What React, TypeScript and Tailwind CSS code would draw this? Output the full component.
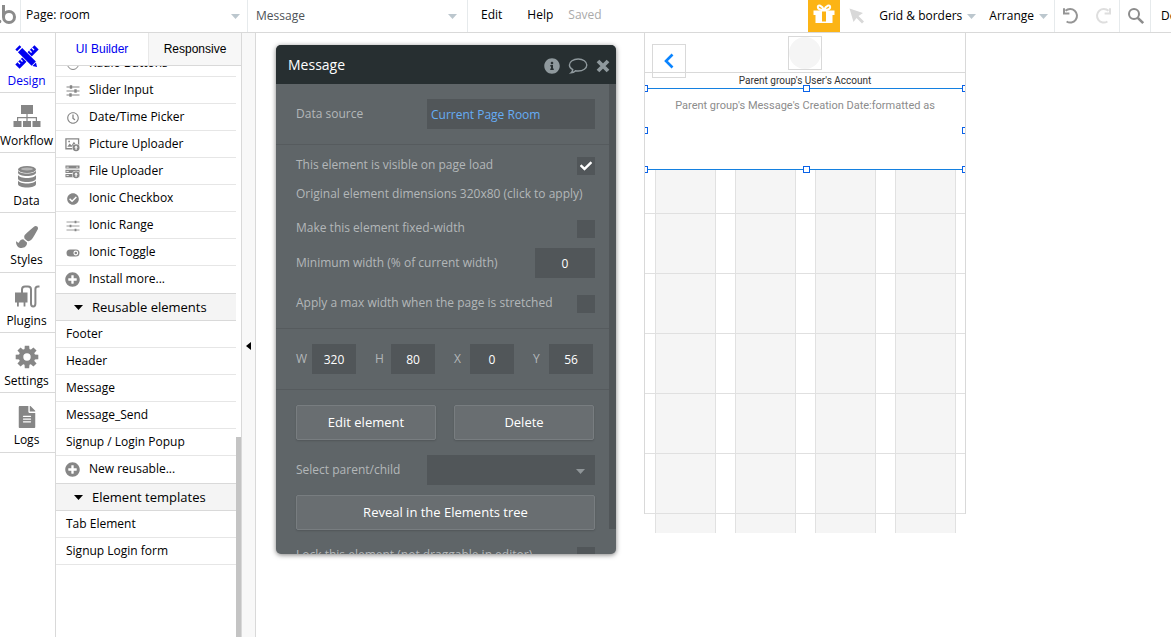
import type { ReactNode } from 'react'
import {
  FaCheck,
  FaCheckCircle,
  FaFileAlt,
  FaInfoCircle,
  FaPaintBrush,
  FaPlusCircle,
  FaRegClock,
} from 'react-icons/fa'

interface CaretProps {
  className?: string
}

function Caret({ className = 'text-[#bcc7ce]' }: CaretProps) {
  return (
    <svg width={9} height={5} viewBox="0 0 9 5" fill="currentColor" className={`shrink-0 ${className}`}>
      <path d="M0 0h9L4.5 5z" />
    </svg>
  )
}

/* ---------- icons ---------- */

function LogoMark() {
  return (
    <svg width={20} height={32} viewBox="0 0 20 32" fill="none" stroke="#8b8b8b" strokeWidth={3}>
      <circle cx={9} cy={17} r={5.5} />
      <path d="M3.500 5v12" />
      <circle cx={-0.5} cy={21.5} r={1.8} fill="#8b8b8b" stroke="none" />
    </svg>
  )
}

function DesignIcon() {
  return (
    <svg width={24} height={24} viewBox="0 0 24 24" fill="currentColor">
      <g transform="rotate(-45 12 12)">
        <path d="M-1.5 9h27v6h-27z" />
        <path d="M1.5 9h1.3v3H1.5zM5 9h1.3v3H5zM17.8 9h1.3v3h-1.3zM21.3 9h1.3v3h-1.3z" fill="#fff" />
      </g>
      <g transform="rotate(45 12 12)">
        <path d="M-2 8.2h29v7.6H-2z" fill="#fff" />
        <path d="M-1.5 9H1v6h-2.500zM2.200 9H21.500v6H2.200zM22.200 9.500l4 2.500-4 2.500z" />
      </g>
    </svg>
  )
}

function WorkflowIcon() {
  return (
    <svg width={28} height={24} viewBox="0 0 28 24" fill="currentColor">
      <path d="M8 0h12v9H8zM13.400 9h1.200v7h-1.200zM4 12h20v1.200H4zM4 12h1.200v4H4zM22.800 12H24v4h-1.200z" />
      <path d="M0.500 16h8v6h-8zM10 16h8v6h-8zM19.500 16h8v6h-8z" />
    </svg>
  )
}

function DataIcon() {
  return (
    <svg width={20} height={24} viewBox="0 0 20 24" fill="currentColor">
      <ellipse cx={10} cy={4.500} rx={9} ry={3.500} />
      <ellipse cx={10} cy={4} rx={6} ry={1.500} fill="#b5b5b5" />
      <path d="M1 5v2.500c0 2 4 3.500 9 3.500s9-1.500 9-3.500V5c0 2-4 3.500-9 3.500S1 7 1 5z" />
      <path d="M1 10v3.500C1 15.500 5 17 10 17s9-1.500 9-3.500V10c-1 2-4.500 3-9 3s-8-1-9-3z" />
      <path d="M1 15.500V19c0 2 4 3.500 9 3.500s9-1.500 9-3.500v-3.500c-1 2-4.500 3-9 3s-8-1-9-3z" />
    </svg>
  )
}

function PluginsIcon() {
  return (
    <svg width={26} height={24} viewBox="0 0 26 24" fill="none" stroke="currentColor" strokeWidth={2}>
      <path d="M8 8V4.500q0-3 3-3h3q3 0 3 3v14q0 3 2.200 3t2.200-3V4q0-2.500 2.600-2.500h1.500" />
      <path d="M1 7.500h12.500v10H1zM3 17.500h1.800v4H3zM9.600 17.500h1.800v4H9.600z" fill="currentColor" stroke="none" />
    </svg>
  )
}

const TEETH = [0, 45, 90, 135, 180, 225, 270, 315]

function GearIcon() {
  return (
    <svg width={24} height={24} viewBox="0 0 24 24" fill="currentColor">
      {TEETH.map(deg => (
        <path key={deg} d="M9.500 5l.3-4.300h4.400l.3 4.300z" transform={`rotate(${deg} 12 12)`} />
      ))}
      <circle cx={12} cy={12} r={6} fill="none" stroke="currentColor" strokeWidth={4.600} />
    </svg>
  )
}

function SliderIcon({ thin = false }: { thin?: boolean }) {
  return (
    <svg width={14} height={14} viewBox="0 0 14 14" stroke="currentColor" strokeWidth={thin ? 0.8 : 1.2}>
      <path d="M0.500 3h13M0.500 7h13M0.500 11h13" />
      {thin ? (
        <path d="M9.500 1.800v2.400M4.500 5.800v2.400M9.500 9.800v2.400" strokeWidth={1.800} />
      ) : (
        <path d="M5 1.200v3.600M9.500 5.200v3.600M4.500 9.200v3.600" strokeWidth={2.400} />
      )}
    </svg>
  )
}

function UploadBadge() {
  return (
    <>
      <circle cx={11.800} cy={11} r={4.200} fill="#fff" />
      <circle cx={11.800} cy={11} r={3.700} />
      <path d="M11.800 8.600l2 2.200h-1.300v2.400h-1.400v-2.400H9.800z" fill="#fff" />
    </>
  )
}

function PictureIcon() {
  return (
    <svg width={16} height={15} viewBox="0 0 16 15" fill="currentColor">
      <path d="M1 1.500h13.500v10.500H1z" fill="none" stroke="currentColor" strokeWidth={1.400} />
      <path d="M2.500 10L5 6.500l2 2L9.500 4.500l2 3V10zM3.500 3.500h1.800V5H3.500z" />
      <UploadBadge />
    </svg>
  )
}

function FileUploadIcon() {
  return (
    <svg width={16} height={15} viewBox="0 0 16 15" fill="currentColor">
      <path d="M0.500 1h15v3.400h-15zM0.500 5.600h15V9h-15zM0.500 10.200h15v3.400h-15z" />
      <path d="M1.500 2.300H4v.8H1.500zM1.500 6.900H4v.8H1.500zM1.500 11.500H4v.8H1.500zM12 2.300h2v.8h-2z" fill="#fff" />
      <UploadBadge />
    </svg>
  )
}

function ToggleIcon() {
  return (
    <svg width={14} height={8} viewBox="0 0 14 8" fill="currentColor">
      <rect x={0.500} y={0.500} width={13} height={7} rx={3.500} />
      <circle cx={9.800} cy={4} r={2.400} fill="#fff" />
      <circle cx={9.800} cy={4} r={1.300} />
    </svg>
  )
}

function GiftIcon() {
  return (
    <svg width={22} height={20} viewBox="0 0 22 20" fill="#fff">
      <path d="M0.500 6.500h21V11h-21zM2.500 10.500h17V19h-17z" />
      <path
        d="M11 6C9 1.500 5 .2 4.800 3 4.600 5.600 8 6 11 6zM11 6c2-4.500 6-5.800 6.200-3C17.400 5.600 14 6 11 6z"
        fill="none"
        stroke="#fff"
        strokeWidth={2}
      />
      <path d="M9 7.500h4V17.500H9z" fill="#fcb415" />
    </svg>
  )
}

function CursorIcon() {
  return (
    <svg width={16} height={16} viewBox="0 0 16 16" fill="#d8d8d8">
      <path d="M0.500 0.500l13.500 4.500-4.500 3 5.500 5.500-2 2-5.500-5.500L4.500 14z" />
    </svg>
  )
}

function UndoIcon() {
  return (
    <svg width={18} height={18} viewBox="0 0 18 18" fill="none" stroke="currentColor" strokeWidth={2}>
      <path d="M3.500 3.800A6.800 6.800 0 1 1 4.600 14.500" />
      <path d="M2 1.200v5.300h5.400" />
    </svg>
  )
}

function SearchIcon() {
  return (
    <svg width={18} height={18} viewBox="0 0 18 18" fill="none" stroke="#8c8c8c" strokeWidth={2}>
      <circle cx={7} cy={7} r={5} />
      <path d="M10.800 10.800l5.400 5.400" strokeWidth={2.600} />
    </svg>
  )
}

function CommentIcon() {
  return (
    <svg width={20} height={16} viewBox="0 0 20 16" fill="none" stroke="currentColor" strokeWidth={1.400}>
      <path d="M10.200 1C5.300 1 1.400 3.600 1.400 7c0 2 1.400 3.700 3.400 4.700-.2 1.400-.9 2.300-1.900 3.200 1.900-.2 3.400-.9 4.700-2.200.8.200 1.700.3 2.600.3 4.900 0 8.600-2.600 8.600-6S15.100 1 10.200 1z" />
    </svg>
  )
}

function CloseIcon() {
  return (
    <svg width={14} height={14} viewBox="0 0 14 14" stroke="currentColor" strokeWidth={3.800}>
      <path d="M2 2l10 10M12 2L2 12" />
    </svg>
  )
}

/* ---------- top bar ---------- */

function TopBar() {
  return (
    <header className="flex h-[33px] shrink-0 overflow-hidden border-b border-[#d9d9d9] bg-white">
      <a href="#home" aria-label="Home" className="w-[21px] shrink-0 border-r border-[#e6eaec]">
        <LogoMark />
      </a>
      <div className="relative w-[227px] shrink-0 border-r border-[#e6eaec]">
        <select aria-label="Page" className="h-[30px] w-full appearance-none bg-transparent pl-[5px] outline-none">
          <option>Page: room</option>
        </select>
        <Caret className="pointer-events-none absolute top-[14px] right-[7px] text-[#bcc7ce]" />
      </div>
      <div className="relative w-[220px] shrink-0 border-r border-[#e6eaec]">
        <select aria-label="Element" className="h-8 w-full appearance-none bg-transparent pl-2 text-[#4d5358] outline-none">
          <option>Message</option>
        </select>
        <Caret className="pointer-events-none absolute top-[14px] right-[10px] text-[#bcc7ce]" />
      </div>
      <div className="flex h-[30px] items-center pl-[13px]">
        <button>Edit</button>
        <button className="ml-[25px]">Help</button>
        <span className="ml-[15px] text-[#aaa]">Saved</span>
      </div>

      <div className="ml-auto flex h-8 shrink-0 items-center">
        <button aria-label="Gift" className="flex h-8 w-8 items-center justify-center bg-[#fcb415] pb-1">
          <GiftIcon />
        </button>
        <button aria-label="Pointer" className="ml-[9px]">
          <CursorIcon />
        </button>
        <button className="ml-[14px] flex items-center gap-[5px]">
          Grid &amp; borders
          <Caret />
        </button>
        <button className="ml-[13px] flex items-center gap-[5px]">
          Arrange
          <Caret />
        </button>
        <div className="ml-[6px] flex h-full items-center gap-[14px] border-x border-[#e6eaec] px-[7px] text-[#959595]">
          <button aria-label="Undo">
            <UndoIcon />
          </button>
          <button aria-label="Redo" className="-scale-x-100 text-[#dedede]">
            <UndoIcon />
          </button>
        </div>
        <button
          aria-label="Search"
          className="flex h-full w-[31px] items-center justify-center border-r border-[#e6eaec] pl-px"
        >
          <SearchIcon />
        </button>
        <button className="h-[30px] w-5 overflow-hidden pl-[10px] text-left">Development</button>
      </div>
    </header>
  )
}

/* ---------- left navigation ---------- */

const NAV: { label: string; icon: ReactNode }[] = [
  { label: 'Design',   icon: <DesignIcon /> },
  { label: 'Workflow', icon: <WorkflowIcon /> },
  { label: 'Data',     icon: <DataIcon /> },
  { label: 'Styles',   icon: <FaPaintBrush size={22} /> },
  { label: 'Plugins',  icon: <PluginsIcon /> },
  { label: 'Settings', icon: <GearIcon /> },
  { label: 'Logs',     icon: <FaFileAlt size={22} /> },
]

function SideNav() {
  return (
    <nav className="w-14 shrink-0 overflow-hidden border-r border-[#d9d9d9] bg-white">
      {NAV.map(item => (
        <a
          key={item.label}
          href={`#${item.label.toLowerCase()}`}
          className={`flex h-[60px] flex-col items-center border-b border-[#d9d9d9] pt-3 pr-[2px] ${
            item.label === 'Design' ? 'text-[#0000f0]' : 'text-[#868686]'
          }`}
        >
          <span className="flex h-6 items-center">{item.icon}</span>
          <span className={`leading-6 ${item.label === 'Design' ? 'text-[#0000f0]' : 'text-black'}`}>
            {item.label}
          </span>
        </a>
      ))}
    </nav>
  )
}

/* ---------- element palette ---------- */

interface Entry {
  label: string
  icon?: ReactNode
}

const INPUTS: Entry[] = [
  { label: 'Radio Buttons',    icon: <span className="h-3 w-3 rounded-full border border-[#868686]" /> },
  { label: 'Slider Input',     icon: <SliderIcon /> },
  { label: 'Date/Time Picker', icon: <FaRegClock size={12} /> },
  { label: 'Picture Uploader', icon: <PictureIcon /> },
  { label: 'File Uploader',    icon: <FileUploadIcon /> },
  { label: 'Ionic Checkbox',   icon: <FaCheckCircle size={12} /> },
  { label: 'Ionic Range',      icon: <SliderIcon thin /> },
  { label: 'Ionic Toggle',     icon: <ToggleIcon /> },
  { label: 'Install more...',  icon: <FaPlusCircle size={15} /> },
]

const REUSABLE: Entry[] = [
  { label: 'Footer' },
  { label: 'Header' },
  { label: 'Message' },
  { label: 'Message_Send' },
  { label: 'Signup / Login Popup' },
  { label: 'New reusable...', icon: <FaPlusCircle size={15} /> },
]

const TEMPLATES: Entry[] = [{ label: 'Tab Element' }, { label: 'Signup Login form' }]

function EntryList({ entries, last = false }: { entries: Entry[]; last?: boolean }) {
  return (
    <ul>
      {entries.map((entry, i) => (
        <li
          key={entry.label}
          className={`flex h-[27px] items-center gap-2 border-b ${entry.icon ? 'pl-[9px]' : 'pl-[10px]'} ${
            i < entries.length - 1 || last ? 'border-[#e6e6e6]' : 'border-transparent'
          }`}
        >
          {entry.icon && (
            <span className="flex w-4 shrink-0 justify-center pt-px pr-px text-[#868686]">{entry.icon}</span>
          )}
          <span>{entry.label}</span>
        </li>
      ))}
    </ul>
  )
}

function SectionHeader({ title }: { title: string }) {
  return (
    <button className="flex h-7 w-full items-center gap-[9px] border-y border-[#d9d9d9] bg-[#f4f4f4] pt-px pl-[18px] text-[13px]">
      <Caret className="text-black" />
      {title}
    </button>
  )
}

function Palette() {
  return (
    <aside className="flex w-[186px] shrink-0 flex-col border-r border-[#d9d9d9] bg-white">
      <div role="tablist" className="flex h-[33px] shrink-0 border-b border-[#d9d9d9] font-['Liberation_Sans']">
        <button role="tab" aria-selected className="w-[92px] text-[#0000f0]">
          UI Builder
        </button>
        <button role="tab" aria-selected={false} className="flex-1 border-l border-[#e8e8e8] bg-[#f7f7f7]">
          Responsive
        </button>
      </div>
      <div className="flex min-h-0 flex-1 overflow-hidden">
        <div className="-mt-4 w-[180px]">
          <EntryList entries={INPUTS} />
          <SectionHeader title="Reusable elements" />
          <EntryList entries={REUSABLE} />
          <SectionHeader title="Element templates" />
          <EntryList entries={TEMPLATES} last />
        </div>
        <div className="mt-[371px] w-[5px] bg-[#c4c4c4]" />
      </div>
    </aside>
  )
}

/* ---------- property editor ---------- */

function CheckRow({ id, label, checked = false }: { id: string; label: string; checked?: boolean }) {
  return (
    <div className="flex items-start justify-between">
      <label htmlFor={id}>{label}</label>
      <span className="relative flex h-[18px] w-[18px]">
        <input
          id={id}
          type="checkbox"
          defaultChecked={checked}
          className="peer h-[18px] w-[18px] appearance-none bg-[#515659]"
        />
        <FaCheck
          size={12}
          className="pointer-events-none absolute top-[3px] left-[3px] hidden text-white peer-checked:block"
        />
      </span>
    </div>
  )
}

const GEOMETRY = [
  { label: 'W', value: '320' },
  { label: 'H', value: '80' },
  { label: 'X', value: '0' },
  { label: 'Y', value: '56' },
]

const BUTTON =
  'h-[35px] rounded-[2px] border border-[#787d80] bg-[#696e71] text-[13px] font-medium text-white shadow-[0_1px_2px_rgba(0,0,0,0.15)]'

function PropertyEditor() {
  return (
    <section className="mt-3 w-[340px] shrink-0 self-start overflow-hidden rounded-[5px] bg-[#5f6568] text-[#b3b7b9] shadow-[0_1px_5px_rgba(0,0,0,0.5)]">
      <div className="flex h-[39px] items-center bg-[#272f31] pr-[6px] pl-3 text-[#8f999d]">
        <h2 className="flex-1 text-sm font-medium text-white">Message</h2>
        <div className="flex items-center gap-2 pt-[3px]">
          <button aria-label="Info">
            <FaInfoCircle size={16} />
          </button>
          <button aria-label="Comments">
            <CommentIcon />
          </button>
          <button aria-label="Close">
            <CloseIcon />
          </button>
        </div>
      </div>

      <div className="flex h-[470px] overflow-hidden">
        <div className="flex-1">
          <div className="flex h-[61px] items-center justify-between border-b border-[#565b5e] pr-[14px] pl-5">
            <label htmlFor="source">Data source</label>
            <input
              id="source"
              defaultValue="Current Page Room"
              className="h-[30px] w-[168px] bg-[#515659] px-1 text-[#66adf5] outline-none"
            />
          </div>

          <div className="flex h-[184px] flex-col border-b border-[#565b5e] pt-3 pr-[14px] pl-5">
            <CheckRow id="visible" label="This element is visible on page load" checked />
            <button className="mt-[10px] self-start leading-[18px]">
              Original element dimensions 320x80 (click to apply)
            </button>
            <div className="mt-[17px]">
              <CheckRow id="fixed" label="Make this element fixed-width" />
            </div>
            <div className="mt-[10px] flex items-center justify-between">
              <label htmlFor="min">Minimum width (% of current width)</label>
              <input
                id="min"
                defaultValue="0"
                className="h-[30px] w-[60px] bg-[#515659] text-center font-medium text-white outline-none"
              />
            </div>
            <div className="mt-[17px]">
              <CheckRow id="max" label="Apply a max width when the page is stretched" />
            </div>
          </div>

          <div className="flex h-[61px] items-center justify-between border-b border-[#565b5e] pr-4 pl-5">
            {GEOMETRY.map(field => (
              <div key={field.label} className="flex items-center">
                <label htmlFor={field.label} className="w-4">
                  {field.label}
                </label>
                <input
                  id={field.label}
                  defaultValue={field.value}
                  className="h-[30px] w-11 bg-[#515659] text-center font-medium text-white outline-none"
                />
              </div>
            ))}
          </div>

          <div className="pt-[15px] pr-[14px] pl-5">
            <div className="grid grid-cols-2 gap-[18px] pr-px">
              <button className={BUTTON}>Edit element</button>
              <button className={BUTTON}>Delete</button>
            </div>
            <div className="mt-[15px] flex items-center justify-between">
              <label htmlFor="parent">Select parent/child</label>
              <div className="relative">
                <select
                  id="parent"
                  className="block h-[30px] w-[168px] appearance-none bg-[#515659] outline-none"
                />
                <Caret className="pointer-events-none absolute top-[14px] right-[10px] text-[#8f9598]" />
              </div>
            </div>
            <button className={`mt-[10px] w-full ${BUTTON}`}>Reveal in the Elements tree</button>
            <div className="mt-[17px]">
              <CheckRow id="lock" label="Lock this element (not draggable in editor)" />
            </div>
          </div>
        </div>
        <div className="h-[445px] w-[7px] bg-[#515659]" />
      </div>
    </section>
  )
}

/* ---------- page canvas ---------- */

// The left and right handles are cut off by the page edge, so the
// selection clips whatever sticks out of it horizontally.
const HANDLES = [
  '-top-1 -left-1',
  '-top-1 left-[158px]',
  '-top-1 -right-1',
  'top-[38px] -left-1',
  'top-[38px] -right-1',
  '-bottom-1 -left-1',
  '-bottom-1 left-[158px]',
  '-bottom-1 -right-1',
]

function Canvas() {
  return (
    <main className="w-[322px] shrink-0 self-start border-x border-[#d9d9d9] font-[Roboto]">
      <div className="relative h-10 border-b border-[#d9d9d9]">
        <button
          aria-label="Back"
          className="absolute top-[11px] left-[7px] flex h-[34px] w-[34px] items-center justify-center border border-[#d9d9d9]"
        >
          <svg width={12} height={16} viewBox="0 0 12 16" fill="none" stroke="#0a84ff" strokeWidth={2.600}>
            <path d="M9.500 1.500L3 8l6.500 6.500" />
          </svg>
        </button>
        <div className="absolute top-[3px] left-[143px] h-[34px] w-[34px] border border-[#d9d9d9]">
          <div className="h-8 w-8 rounded-full bg-[#f5f5f5]" />
        </div>
      </div>
      <p className="h-[15px] text-center text-[10px] leading-4 text-[#333]">Parent group's User's Account</p>

      <div className="relative h-[82px] border-y border-[#1480e0] bg-white pt-[9px] text-center text-[11px] leading-4 text-[#8c8c8c]">
        Parent group's Message's Creation Date:formatted as
        <div className="absolute -inset-y-1 inset-x-0 overflow-hidden py-1">
          <div className="relative h-full">
            {HANDLES.map(pos => (
              <span key={pos} className={`absolute h-[7px] w-[7px] border border-[#0a62e8] bg-white ${pos}`} />
            ))}
          </div>
        </div>
      </div>

      <div className="relative">
        <div className="absolute inset-x-0 top-0 -bottom-[19px] grid grid-cols-4 gap-[19px] pr-[9px] pl-[10px]">
          {[0, 1, 2, 3].map(col => (
            <div key={col} className="border-x border-[#e1e1e1] bg-[#f5f5f5]" />
          ))}
        </div>
        <div className="relative">
          <div className="h-11 border-b border-[#e0e0e0]" />
          {[0, 1, 2, 3, 4].map(row => (
            <div key={row} className="h-[60px] border-b border-[#e0e0e0]" />
          ))}
        </div>
      </div>
    </main>
  )
}

export default function App() {
  return (
    <div className="flex h-screen flex-col overflow-hidden bg-white font-['Open_Sans',sans-serif] text-xs text-black">
      <TopBar />
      <div className="flex min-h-0 flex-1">
        <SideNav />
        <Palette />
        <button
          aria-label="Collapse palette"
          className="flex w-[14px] shrink-0 items-center justify-center border-r border-[#d9d9d9] bg-[#f8f8f8] pt-[22px]"
        >
          <svg width={5} height={8} viewBox="0 0 5 8">
            <path d="M5 0v8L0 4z" />
          </svg>
        </button>
        <div className="flex min-w-0 flex-1 gap-7 overflow-hidden pl-5">
          <PropertyEditor />
          <Canvas />
        </div>
      </div>
    </div>
  )
}
